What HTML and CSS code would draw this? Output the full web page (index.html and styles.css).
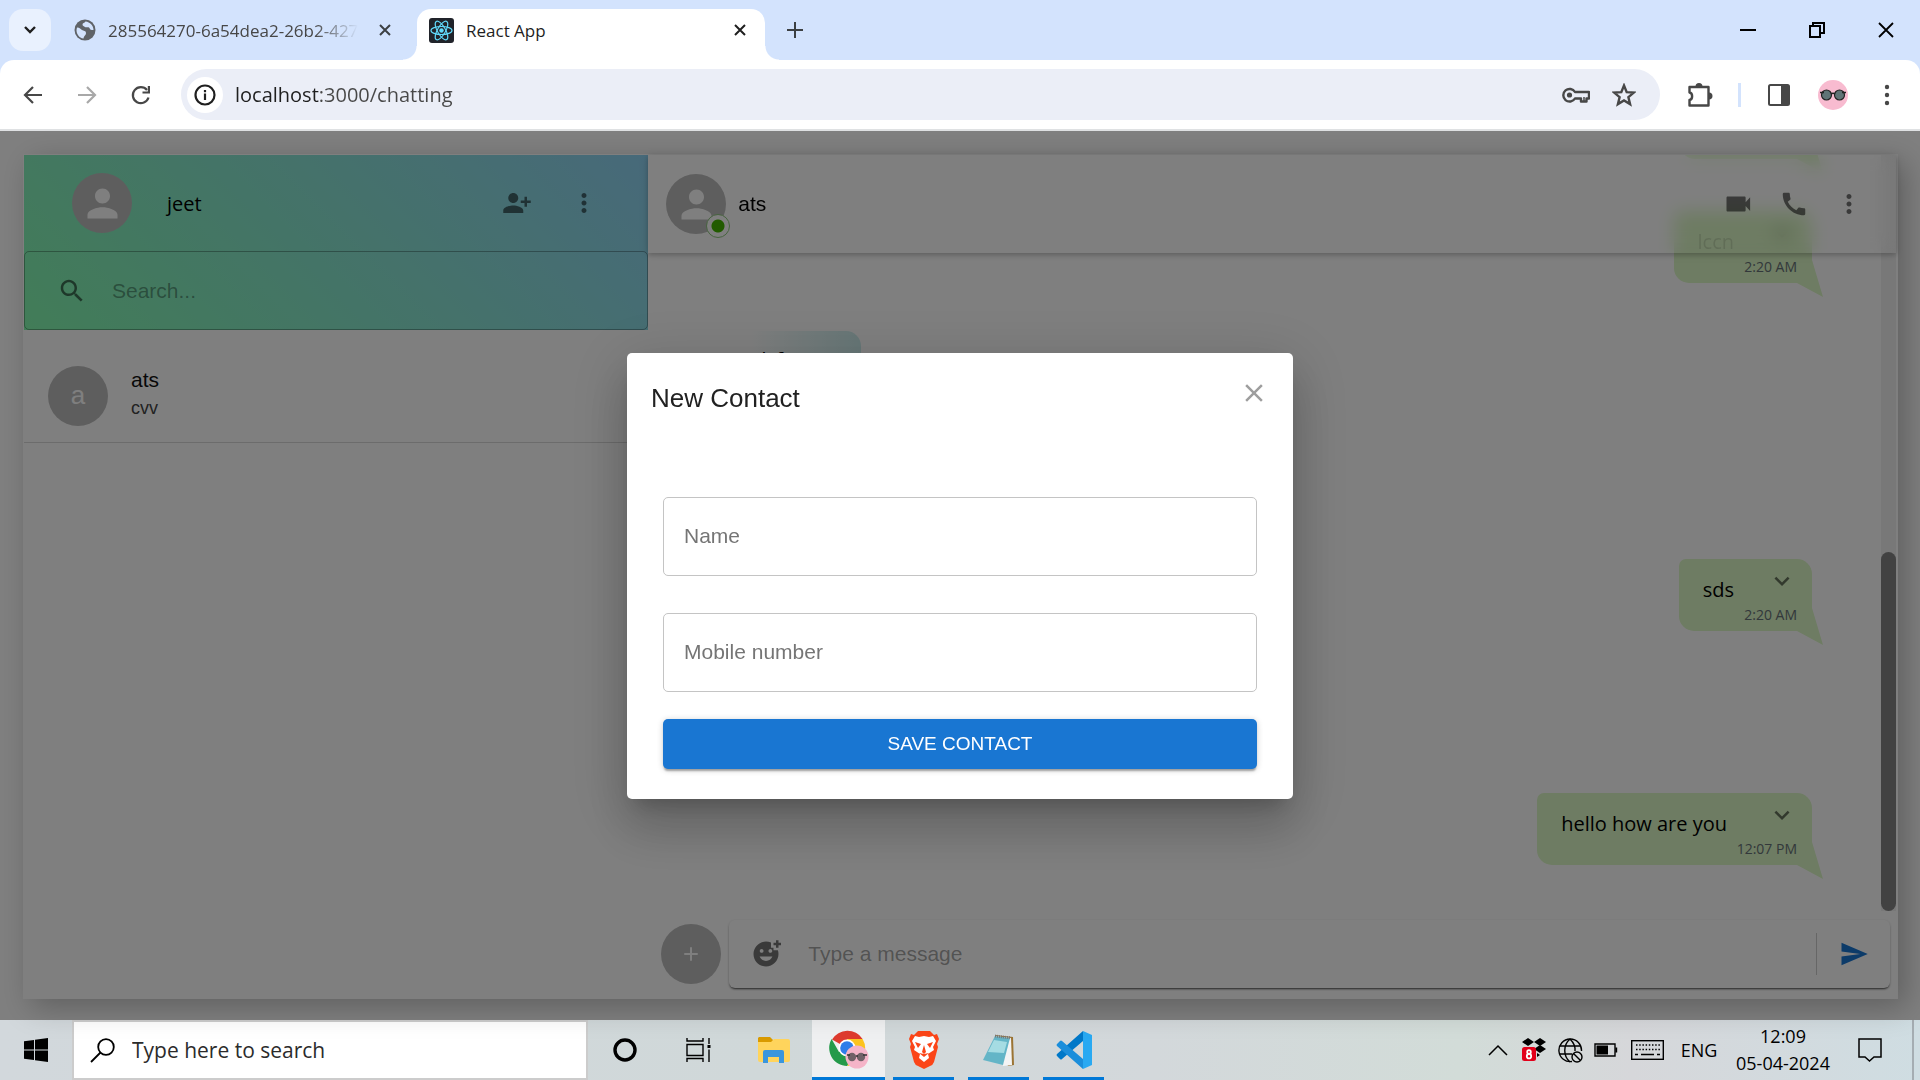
FILE: index.html
```html
<!DOCTYPE html>
<html lang="en">
<head>
<meta charset="utf-8">
<title>React App</title>
<link rel="stylesheet" href="styles.css">
</head>
<body>
<header class="tabstrip">
  <button class="tab-search" aria-label="Search tabs"><svg width="14" height="14" viewBox="0 0 14 14"><path d="M2 4l5 5 5-5" fill="none" stroke="#1f1f1f" stroke-width="2.4"/></svg></button>
  <div class="tab">
    <svg width="22" height="22" viewBox="0 0 22 22"><circle cx="11" cy="11" r="10.5" fill="#5f6368"/><path d="M3 8.500c3 0 3.500 1.500 5 2.500s4 .5 4 3-2 2.500-2.500 5.500C5 19 2.500 15 2.500 11zM11.500 2.500c-1 1.500-3 1.500-3 3s1.500 1.500 2.500 2.500 3-.5 4 .5 1 2.500 3 2.500h1.500c0-4.500-3.500-8-8-8.500z" fill="#d3e3fd"/></svg>
    <span class="tab-title fade">285564270-6a54dea2-26b2-427</span>
    <button class="tab-close" aria-label="Close tab"><svg width="14" height="14" viewBox="0 0 14 14"><path d="M2 2l10 10M12 2L2 12" stroke="#3c4043" stroke-width="2"/></svg></button>
  </div>
  <div class="tab active">
    <svg width="25" height="25" viewBox="0 0 25 25"><rect width="25" height="25" rx="3" fill="#20232a"/><g fill="none" stroke="#61dafb" stroke-width="1.200"><ellipse cx="12.500" cy="12.500" rx="10.500" ry="4"/><ellipse cx="12.500" cy="12.500" rx="10.500" ry="4" transform="rotate(60 12.500 12.500)"/><ellipse cx="12.500" cy="12.500" rx="10.500" ry="4" transform="rotate(120 12.500 12.500)"/></g><circle cx="12.500" cy="12.500" r="2.200" fill="#61dafb"/></svg>
    <span class="tab-title">React App</span>
    <button class="tab-close" aria-label="Close tab"><svg width="14" height="14" viewBox="0 0 14 14"><path d="M2 2l10 10M12 2L2 12" stroke="#1f1f1f" stroke-width="2"/></svg></button>
  </div>
  <button class="new-tab" aria-label="New tab"><svg width="16" height="16" viewBox="0 0 16 16"><path d="M8 0v16M0 8h16" stroke="#3c4043" stroke-width="2"/></svg></button>
  <div class="window-controls">
    <button aria-label="Minimize"><svg width="16" height="16" viewBox="0 0 16 16"><path d="M0 8h16" stroke="#000" stroke-width="2"/></svg></button>
    <button aria-label="Restore"><svg width="16" height="16" viewBox="0 0 16 16"><path d="M1 4h10v11H1zM4 4V1h11v10h-4" fill="none" stroke="#000" stroke-width="2"/></svg></button>
    <button aria-label="Close"><svg width="16" height="16" viewBox="0 0 16 16"><path d="M1 1l14 14M15 1L1 15" stroke="#000" stroke-width="1.800"/></svg></button>
  </div>
</header>

<nav class="toolbar">
  <button aria-label="Back"><svg width="20" height="20" viewBox="0 0 20 20"><path d="M10 2l-8 8 8 8M2 10h17" fill="none" stroke="#474747" stroke-width="2.200"/></svg></button>
  <button aria-label="Forward"><svg width="20" height="20" viewBox="0 0 20 20"><path d="M10 2l8 8-8 8M18 10H1" fill="none" stroke="#a8a8a8" stroke-width="2.200"/></svg></button>
  <button aria-label="Reload"><svg width="22" height="22" viewBox="0 0 22 22"><path d="M18.500 13.500a8 8 0 1 1-1.500-7.500" fill="none" stroke="#474747" stroke-width="2.200"/><path d="M20 2v7.500h-7.500v-2h5.300V2z" fill="#474747"/></svg></button>
  <div class="omnibox">
    <button class="site-info" aria-label="Site information"><svg width="22" height="22" viewBox="0 0 22 22"><circle cx="11" cy="11" r="9.500" fill="none" stroke="#1f1f1f" stroke-width="2.200"/><path d="M11 9.500V16M11 6v2.200" stroke="#1f1f1f" stroke-width="2.200"/></svg></button>
    <input class="address" type="text" value="localhost:3000/chatting" aria-label="Address">
    <button aria-label="Passwords"><svg width="28" height="18" viewBox="0 0 28 18"><path d="M13 6H27v6.500h-2.500v3h-5.500v-3h-6A6.300 6.300 0 1 1 13 6z" fill="none" stroke="#474747" stroke-width="2.400" stroke-linejoin="round"/><circle cx="7.500" cy="9" r="2.600" fill="#474747"/><path d="M22 11v4" stroke="#474747" stroke-width="1.500"/></svg></button>
    <button aria-label="Bookmark"><svg width="24" height="24" viewBox="0 0 24 24"><path d="M12 2.500l2.700 6.600 7.100.5-5.400 4.600 1.700 6.900-6.100-3.700-6.100 3.700 1.700-6.900-5.400-4.600 7.100-.5z" fill="none" stroke="#474747" stroke-width="2.400"/></svg></button>
  </div>
  <button class="after-omnibox" aria-label="Extensions"><svg width="26" height="26" viewBox="0 0 26 26"><path d="M2.500 5h19v18.500h-19v-5.500c3.500-.5 3.500-7 0-7.500z" fill="none" stroke="#474747" stroke-width="2.400" stroke-linejoin="round"/><path d="M8.500 4.500a3.500 3.500 0 0 1 7 0zM22 10.500a3.500 3.500 0 0 1 0 7z" fill="#474747"/></svg></button>
  <span class="toolbar-divider"></span>
  <button aria-label="Side panel"><svg width="22" height="22" viewBox="0 0 22 22"><rect x="1" y="1" width="20" height="20" rx="1.500" fill="none" stroke="#474747" stroke-width="2"/><path d="M13 1h8v20h-8z" fill="#474747"/></svg></button>
  <button aria-label="Profile"><svg width="30" height="30" viewBox="0 0 30 30"><circle cx="15" cy="15" r="15" fill="#f8bbd0"/><circle cx="8.500" cy="15" r="5" fill="#607476" stroke="#222" stroke-width="1.200"/><circle cx="21.500" cy="15" r="5" fill="#607476" stroke="#222" stroke-width="1.200"/><path d="M2 12.500h4M24 12.500h4M13 14q2-1.500 4 0" fill="none" stroke="#222" stroke-width="1.500"/></svg></button>
  <button aria-label="Menu"><svg width="6" height="22" viewBox="0 0 6 22"><g fill="#474747"><circle cx="3" cy="3" r="2.200"/><circle cx="3" cy="11" r="2.200"/><circle cx="3" cy="19" r="2.200"/></g></svg></button>
</nav>

<main class="page">
  <div class="app">
    <aside class="sidebar">
      <div class="sidebar-top">
        <div class="profile">
          <span class="avatar"><svg class="person" viewBox="0 0 24 24"><path d="M12 12c2.210 0 4-1.790 4-4s-1.790-4-4-4-4 1.790-4 4 1.790 4 4 4zm0 2c-2.670 0-8 1.340-8 4v2h16v-2c0-2.660-5.330-4-8-4z"/></svg></span>
          <span class="profile-name">jeet</span>
          <button class="icon-btn" aria-label="Add contact"><svg class="icon" viewBox="0 0 24 24"><path d="M13 8c0-2.210-1.790-4-4-4S5 5.790 5 8s1.790 4 4 4 4-1.790 4-4zm2 2v2h3v3h2v-3h3v-2h-3V7h-2v3h-3zM1 18v2h16v-2c0-2.660-5.330-4-8-4s-8 1.340-8 4z"/></svg></button>
          <button class="icon-btn" aria-label="More"><svg class="icon" viewBox="0 0 24 24"><path d="M12 8c1.100 0 2-.9 2-2s-.9-2-2-2-2 .9-2 2 .9 2 2 2zm0 2c-1.100 0-2 .9-2 2s.9 2 2 2 2-.9 2-2-.9-2-2-2zm0 6c-1.100 0-2 .9-2 2s.9 2 2 2 2-.9 2-2-.9-2-2-2z"/></svg></button>
        </div>
        <div class="search">
          <svg class="icon" viewBox="0 0 24 24"><path d="M15.500 14h-.79l-.28-.27C15.410 12.590 16 11.110 16 9.500 16 5.910 13.090 3 9.500 3S3 5.910 3 9.500 5.910 16 9.500 16c1.610 0 3.090-.59 4.230-1.570l.27.28v.79l5 4.990L20.490 19l-4.990-5zm-6 0C7.010 14 5 11.990 5 9.500S7.010 5 9.500 5 14 7.010 14 9.500 11.990 14 9.500 14z"/></svg>
          <input type="text" placeholder="Search..." aria-label="Search">
        </div>
      </div>
      <a class="chat-row" href="#ats">
        <span class="avatar letter">a</span>
        <span class="chat-info"><span class="chat-name">ats</span><span class="chat-last">cvv</span></span>
      </a>
    </aside>

    <section class="chat">
      <div class="thread">
        <div class="messages">
          <div class="bubble sent blank"></div>
          <div class="bubble sent under-header"><span class="text">lccn</span><svg class="icon" viewBox="0 0 24 24"><path d="M7.410 8.590L12 13.170l4.590-4.580L18 10l-6 6-6-6z"/></svg><time>2:20 AM</time></div>
          <div class="bubble received"><span class="text">dsf</span></div>
          <div class="bubble sent spaced"><span class="text">sds</span><svg class="icon" viewBox="0 0 24 24"><path d="M7.410 8.590L12 13.170l4.590-4.580L18 10l-6 6-6-6z"/></svg><time>2:20 AM</time></div>
          <div class="bubble sent spaced long"><span class="text">hello how are you</span><svg class="icon" viewBox="0 0 24 24"><path d="M7.410 8.590L12 13.170l4.590-4.580L18 10l-6 6-6-6z"/></svg><time>12:07 PM</time></div>
        </div>
        <div class="scrollbar"><div class="thumb"></div></div>
      </div>
      <header class="chat-header">
        <span class="avatar online"><svg class="person" viewBox="0 0 24 24"><path d="M12 12c2.210 0 4-1.790 4-4s-1.790-4-4-4-4 1.790-4 4 1.790 4 4 4zm0 2c-2.670 0-8 1.340-8 4v2h16v-2c0-2.660-5.330-4-8-4z"/></svg><span class="badge"></span></span>
        <span class="peer">ats</span>
        <button class="icon-btn" aria-label="Video call"><svg class="icon" viewBox="0 0 24 24"><path d="M17 10.500V7c0-.55-.45-1-1-1H1c-.55 0-1 .45-1 1v10c0 .55.45 1 1 1h15c.55 0 1-.45 1-1v-3.500l4 4v-11l-4 4z" transform="translate(2 0) scale(.9 1)"/></svg></button>
        <button class="icon-btn" aria-label="Call"><svg class="icon" viewBox="0 0 24 24"><path d="M20.010 15.380c-1.230 0-2.420-.2-3.530-.56-.35-.12-.74-.03-1.010.24l-1.570 1.970c-2.830-1.350-5.480-3.900-6.890-6.830l1.950-1.660c.27-.28.35-.67.24-1.020-.37-1.110-.56-2.300-.56-3.530 0-.54-.45-.99-.99-.99H4.190C3.650 3 3 3.240 3 3.990 3 13.280 10.730 21 20.010 21c.71 0 .99-.63.99-1.180v-3.450c0-.54-.45-.99-.99-.99z"/></svg></button>
        <button class="icon-btn" aria-label="More"><svg class="icon" viewBox="0 0 24 24"><path d="M12 8c1.100 0 2-.9 2-2s-.9-2-2-2-2 .9-2 2 .9 2 2 2zm0 2c-1.100 0-2 .9-2 2s.9 2 2 2 2-.9 2-2-.9-2-2-2zm0 6c-1.100 0-2 .9-2 2s.9 2 2 2 2-.9 2-2-.9-2-2-2z"/></svg></button>
      </header>
      <form class="composer">
        <button type="button" class="avatar" aria-label="Attach"><svg width="14" height="14" viewBox="0 0 14 14"><path d="M7 1v12M1 7h12" stroke="#fff" stroke-width="2" stroke-linecap="round"/></svg></button>
        <div class="compose-box">
          <button type="button" class="icon-btn" aria-label="Emoji"><svg class="icon" viewBox="0 0 24 24"><path d="M18 9V7h-2V2.840C14.770 2.300 13.420 2 11.990 2 6.470 2 2 6.480 2 12s4.470 10 9.990 10C17.520 22 22 17.520 22 12c0-1.050-.17-2.050-.47-3H18zm-2.500-1c.83 0 1.500.67 1.500 1.500s-.67 1.500-1.500 1.500-1.500-.67-1.500-1.500.67-1.500 1.500-1.500zm-7 0c.83 0 1.500.67 1.500 1.500S9.330 11 8.500 11 7 10.330 7 9.500 7.670 8 8.500 8zm3.500 9.500c-2.330 0-4.310-1.460-5.110-3.500h10.220c-.8 2.040-2.780 3.500-5.110 3.500zM22 3h2v2h-2v2h-2V5h-2V3h2V1h2v2z"/></svg></button>
          <input type="text" placeholder="Type a message" aria-label="Message">
          <button type="submit" class="send" aria-label="Send"><svg class="icon" viewBox="0 0 24 24"><path d="M2.010 21L23 12 2.010 3 2 10l15 2-15 2z"/></svg></button>
        </div>
      </form>
    </section>
  </div>

  <div class="backdrop">
    <form class="modal" role="dialog" aria-labelledby="modal-title">
      <div class="modal-head">
        <h2 id="modal-title">New Contact</h2>
        <button type="button" class="modal-close" aria-label="Close"><svg class="icon" viewBox="0 0 24 24"><path d="M19 6.410L17.590 5 12 10.590 6.410 5 5 6.410 10.590 12 5 17.590 6.410 19 12 13.410 17.590 19 19 17.590 13.410 12z"/></svg></button>
      </div>
      <div class="modal-body">
        <input class="field" type="text" placeholder="Name" aria-label="Name">
        <input class="field" type="tel" placeholder="Mobile number" aria-label="Mobile number">
        <button type="submit" class="save">SAVE CONTACT</button>
      </div>
    </form>
  </div>
</main>

<footer class="taskbar">
  <button class="start" aria-label="Start"><svg width="24" height="24" viewBox="0 0 24 24"><path d="M0 3.300L10 2v9.500H0zM11 1.800L24 0v11.500H11zM0 12.500h10V22L0 20.700zM11 12.500h13V24l-13-1.800z"/></svg></button>
  <label class="task-search">
    <svg width="25" height="25" viewBox="0 0 25 25"><circle cx="16" cy="9" r="7.800" fill="none" stroke="#000" stroke-width="1.800"/><path d="M10.500 14.500L1 24" stroke="#000" stroke-width="1.800"/></svg>
    <input type="text" placeholder="Type here to search">
  </label>
  <div class="task-apps">
    <button aria-label="Cortana"><svg width="24" height="24" viewBox="0 0 24 24"><circle cx="12" cy="12" r="10" fill="none" stroke="#000" stroke-width="3.400"/></svg></button>
    <button aria-label="Task view"><svg width="26" height="26" viewBox="0 0 26 26"><path d="M1 1v3h16V1M1 7.500h16v11H1zM1 25v-3.500h16V25M23 1v6M23 12.500V25" fill="none" stroke="#000" stroke-width="1.400"/><path d="M21.500 8h3v3h-3z"/></svg></button>
    <button aria-label="File Explorer"><svg width="32" height="28" viewBox="0 0 32 28"><path d="M1 1h11l3 3v4H0V2z" fill="#d99a00"/><path d="M0 6h13l3-3h14q2 0 2 2v19q0 2-2 2H2q-2 0-2-2z" fill="#ffd45c"/><path d="M5 27V16q0-2 2-2h17q2 0 2 2v11h-5v-6H10v6z" fill="#3a96dd"/></svg></button>
    <button class="running current" aria-label="Chrome"><svg width="40" height="40" viewBox="0 0 40 40"><path d="M18 18L3 9.500A18 18 0 0 1 33.600 9H18z" fill="#de3b2e"/><path d="M18 18L18 9H33.600A18 18 0 0 1 18 36l8-14z" fill="#fcc31e"/><path d="M18 18l8 4-8 14A18 18 0 0 1 2.600 9L10 22z" fill="#249a4a"/><circle cx="18" cy="18" r="8.500" fill="#fff"/><circle cx="18" cy="18" r="6.800" fill="#2f7de9"/><circle cx="28" cy="27" r="11.500" fill="#f5b4c8"/><circle cx="23" cy="27" r="4.200" fill="#716167"/><circle cx="32" cy="27" r="4.200" fill="#716167"/><path d="M18 25h3M34 25h4M27 26h2" stroke="#333" stroke-width="1.500"/></svg></button>
    <button class="running" aria-label="Brave"><svg width="30" height="38" viewBox="0 0 30 38"><path d="M9 0h12l4 4 3-1 2 5-2 5 1 3-4 15q-1 3-4 4l-6 3-6-3q-3-1-4-4L1 16l1-3-2-5 2-5 3 1z" fill="#fb4518"/><path d="M15 5l5 1 4-1 3 5-3 6 1 3-6 4 1 4-5 4-5-4 1-4-6-4 1-3-3-6 3-5 4 1z" fill="#fff"/><path d="M6 11l6 2-3 4zM24 11l-6 2 3 4zM15 14l2 7-2 2-2-2zM10 22l5 4 5-4-5 1z" fill="#fb4518"/></svg></button>
    <button class="running" aria-label="Notepad"><svg width="34" height="34" viewBox="0 0 34 34"><path d="M13 2l18 2 1 28-6 1z" fill="#9b7434"/><path d="M13 3l16 2 1 27-9 1z" fill="#f4f4f4"/><path d="M13 3l15 2-7 27-20-5z" fill="#64b5c7"/><path d="M12 7l13 2-3 11-16-1z" fill="#a5dce3"/><path d="M13 3l16 2" stroke="#777" stroke-width="3" stroke-dasharray="1 1"/></svg></button>
    <button class="running" aria-label="Visual Studio Code"><svg width="36" height="38" viewBox="0 0 36 38"><path d="M27 0v10L6 28q-1 1-2 0l-3-3q-1-1 0-2z" fill="#0078c8"/><path d="M27 38V28L6 10q-1-1-2 0l-3 3q-1 1 0 2z" fill="#1b8edb"/><path d="M27 0l9 4v30l-9 4z" fill="#29a9f2"/></svg></button>
  </div>
  <div class="tray">
    <button aria-label="Show hidden icons"><svg width="20" height="12" viewBox="0 0 20 12"><path d="M1 11l9-9 9 9" fill="none" stroke="#000" stroke-width="1.500"/></svg></button>
    <button aria-label="Dropbox"><svg width="24" height="24" viewBox="0 0 24 24"><path d="M6 0l6 4-6 4-6-4zM18 0l6 4-6 4-6-4zM18 7l6 4-6 4-6-4zM15 15l3 2-3 2z"/><rect y="9" width="14" height="14" rx="2.500" fill="#e2001a"/><g fill="none" stroke="#fff" stroke-width="1.800"><circle cx="7" cy="14" r="1.800"/><circle cx="7" cy="18.200" r="2.200"/></g></svg></button>
    <button aria-label="Network"><svg width="25" height="25" viewBox="0 0 25 25"><g fill="none" stroke="#000" stroke-width="1.400"><path d="M14 23.500A11.300 11.300 0 1 1 23.500 13"/><path d="M12 1c-7 6-7 17 0 23M12 1c4 4 5.500 8 5 12M2 8h20M2 16h12"/><circle cx="19" cy="19" r="5"/><path d="M15.500 15.500l7 7"/></g></svg></button>
    <button aria-label="Battery"><svg width="24" height="14" viewBox="0 0 24 14"><path d="M1 1h20v12H1zM22.500 4.500v5" fill="none" stroke="#000" stroke-width="1.400"/><path d="M2.500 2.500H14v9H2.500z"/></svg></button>
    <button aria-label="Touch keyboard"><svg width="33" height="20" viewBox="0 0 33 20"><rect x=".7" y=".7" width="31.600" height="18.600" fill="none" stroke="#000" stroke-width="1.400"/><path d="M5 5h24M5 9.500h24" stroke="#000" stroke-width="1.400" stroke-dasharray="1.500 1.700"/><path d="M4 14.500h3M10 14.500h13M26 14.500h3" stroke="#000" stroke-width="1.400"/></svg></button>
    <button>ENG</button>
    <button class="clock"><span>12:09</span><span>05-04-2024</span></button>
    <button aria-label="Notifications"><svg width="24" height="24" viewBox="0 0 24 24"><path d="M1 1h22v18h-7l-4.500 4L7 19H1z" fill="none" stroke="#000" stroke-width="1.500"/></svg></button>
    <button class="show-desktop" aria-label="Show desktop"></button>
  </div>
</footer>
</body>
</html>
```
FILE: styles.css
```css
* { box-sizing: border-box; }

body {
  margin: 0;
  height: 100vh;
  display: flex;
  flex-direction: column;
  overflow: hidden;
  font-family: "Open Sans", "Noto Sans", sans-serif;
  font-size: 20px;
  color: #000;
}

button {
  border: 0;
  padding: 0;
  background: none;
  font: inherit;
  color: inherit;
  display: flex;
  align-items: center;
  justify-content: center;
}

input {
  border: 0;
  padding: 0;
  min-width: 0;
  background: none;
  font: 21px "Liberation Sans", Arial, sans-serif;
  outline: 0;
}

svg { display: block; flex: none; }

/* Tab strip */
.tabstrip {
  flex: none;
  height: 60px;
  padding: 9px 0 0 9px;
  display: flex;
  background: #d3e3fd;
}
.tab-search {
  width: 42px;
  height: 42px;
  border-radius: 14px;
  background: #e9f1fe;
}
.tab {
  width: 348px;
  margin-left: 11px;
  padding: 0 18px 9px 12px;
  display: flex;
  align-items: center;
  gap: 12px;
  font-size: 17px;
  color: #474747;
}
.tab-title { flex: 1; white-space: nowrap; overflow: hidden; }
.fade { mask-image: linear-gradient(90deg, #000 80%, transparent 97%); }
.tab-close { width: 14px; height: 14px; }
.tab.active {
  margin-left: 7px;
  background: #fff;
  border-radius: 14px 14px 0 0;
  color: #1f1f1f;
  position: relative;
}
.tab.active::before,
.tab.active::after {
  content: "";
  position: absolute;
  bottom: 0;
  width: 14px;
  height: 14px;
}
.tab.active::before { right: 100%; background: radial-gradient(circle at 0 0, transparent 13px, #fff 14px); }
.tab.active::after { left: 100%; background: radial-gradient(circle at 100% 0, transparent 13px, #fff 14px); }
.new-tab { width: 60px; height: 42px; }
.window-controls { margin-left: auto; display: flex; }
.window-controls button { width: 69px; height: 42px; }

/* Toolbar */
.toolbar {
  flex: none;
  height: 71px;
  padding: 9px 6px;
  display: flex;
  border-bottom: 2px solid #dfe1e3;
  background: linear-gradient(#fff, #fff) padding-box, #d3e3fd;
  border-radius: 14px 14px 0 0;
  box-shadow: 0 -14px 0 14px #d3e3fd;
  clip-path: inset(0);
}
.toolbar > button { width: 54px; height: 51px; }
.toolbar > .after-omnibox { margin-left: 13px; }
.toolbar-divider {
  width: 3px;
  height: 24px;
  margin: 14px 11px;
  background: #d3e3fd;
}
.omnibox {
  flex: 1;
  height: 51px;
  margin-left: 13px;
  padding: 0 12px 0 6px;
  display: flex;
  align-items: center;
  border-radius: 26px;
  background: #ebeef7;
}
.omnibox button { width: 48px; height: 36px; }
.omnibox .site-info { width: 36px; border-radius: 50%; background: #fff; }
.address {
  flex: 1;
  margin-left: 12px;
  font: 20px "Open Sans", "Noto Sans", sans-serif;
  color: transparent;
  background: linear-gradient(90deg, #1f1f1f 84px, #474747 84px);
  background-clip: text;
}

/* Page */
.page {
  flex: 1;
  min-height: 0;
  display: grid;
  position: relative;
}
.app {
  margin: 23px 22px 21px 23px;
  min-height: 0;
  border: 1px solid #fff;
  display: grid;
  grid-template-columns: 1fr 2fr;
  box-shadow: 8px 8px 28px rgba(0, 0, 0, .25);
}
.icon { width: 30px; height: 30px; fill: rgba(0, 0, 0, .54); }
.icon-btn { width: 30px; height: 30px; }
.avatar {
  flex: none;
  width: 60px;
  height: 60px;
  border-radius: 50%;
  background: #bdbdbd;
  display: flex;
  align-items: center;
  justify-content: center;
}
.person { width: 45px; height: 45px; fill: #fff; }

.sidebar-top { background: linear-gradient(45deg, #84fab0, #8fd3f4); }
.profile {
  height: 96px;
  padding: 0 49px 0 48px;
  display: flex;
  align-items: center;
}
.profile-name { flex: 1; margin-left: 35px; font-weight: 500; }
.profile .icon-btn + .icon-btn { margin-left: 37px; }
.search {
  height: 79px;
  padding: 0 32px;
  display: flex;
  align-items: center;
  gap: 25px;
  border: 1px solid rgba(0, 0, 0, .3);
  border-radius: 5px;
}
.search input { flex: 1; }
.search input::placeholder,
.compose-box input::placeholder { color: rgba(0, 0, 0, .37); }
.chat-row {
  height: 113px;
  padding: 19px 24px 0;
  display: flex;
  align-items: center;
  gap: 23px;
  border-bottom: 1px solid #d8d8d8;
  font-family: "Liberation Sans", Arial, sans-serif;
  color: #111;
  text-decoration: none;
}
.letter { font-size: 26px; color: #fff; }
.chat-info {
  padding-bottom: 4px;
  display: flex;
  flex-direction: column;
  line-height: 28px;
}
.chat-name { font-size: 21px; }
.chat-last { font-size: 18px; color: #444; }

/* Chat pane: the thread runs on underneath the header */
.chat {
  min-height: 0;
  display: grid;
  grid-template: 98px minmax(0, 1fr) 87px / minmax(0, 1fr);
}
.thread {
  grid-area: 1 / 1 / 3 / 2;
  min-height: 0;
  display: flex;
  overflow: hidden;
}
.messages {
  flex: 1;
  min-height: 0;
  padding: 0 69px 46px 82px;
  display: flex;
  flex-direction: column;
  justify-content: flex-end;
  align-items: flex-end;
}
.scrollbar {
  width: 15px;
  margin-right: 1px;
  background: #f1f1f1;
  display: flex;
  align-items: flex-end;
}
.thumb { width: 15px; height: 47.5%; border-radius: 8px; background: #858585; }

.bubble {
  flex: none;
  height: 72px;
  padding: 7px 15px 0 24px;
  display: grid;
  grid-template-columns: auto 30px;
  grid-template-rows: 30px 22px;
  column-gap: 33px;
  border-radius: 7px 15px 0 15px;
  background: #dcf8c6;
  position: relative;
}
.bubble.long { column-gap: 40px; }
.bubble .text { line-height: 48px; white-space: nowrap; }
.bubble time {
  grid-column: 1 / 3;
  justify-self: end;
  line-height: 38px;
  font-size: 14px;
  color: #667176;
}
.sent::after {
  content: "";
  position: absolute;
  right: -11px;
  top: 49px;
  width: 26px;
  height: 37px;
  background: inherit;
  clip-path: polygon(15px 0, 100% 100%, 0 23px);
}
.blank { width: 132px; }
.spaced { margin-top: 162px; }
.received {
  align-self: flex-start;
  margin-top: 48px;
  border-radius: 15px 15px 15px 0;
  background: linear-gradient(90deg, #fff 15%, #cdeeee);
}
.received .text { line-height: 44px; }
.received + .spaced { margin-top: 156px; }
.under-header { margin-top: 52px; }
.under-header .text {
  position: relative;
  z-index: 3;
  color: rgba(0, 0, 0, .12);
}

.chat-header {
  grid-area: 1 / 1;
  z-index: 2;
  margin-right: 1px;
  padding: 0 32px 0 18px;
  display: flex;
  align-items: center;
  backdrop-filter: blur(9px);
  box-shadow: 0 2px 5px rgba(0, 0, 0, .2), 0 1px 10px rgba(0, 0, 0, .1);
}
.chat-header .icon-btn + .icon-btn { margin-left: 25px; }
.online { position: relative; }
.badge {
  position: absolute;
  right: -4px;
  bottom: -4px;
  width: 24px;
  height: 24px;
  border: 1px solid #8fc77f;
  border-radius: 50%;
  background: radial-gradient(circle, #44b700 6px, #fff 7px);
}
.peer { flex: 1; margin-left: 12px; font: 21px "Liberation Sans", Arial, sans-serif; }

.composer {
  grid-row: 3;
  padding: 9px 7px 10px 13px;
  display: flex;
  align-items: center;
  gap: 8px;
}
.compose-box {
  flex: 1;
  height: 68px;
  padding-left: 22px;
  display: flex;
  align-items: center;
  border-radius: 6px;
  box-shadow: 0 2px 2px -1px rgba(0, 0, 0, .6), 0 1px 3px rgba(0, 0, 0, .2);
}
.compose-box input { flex: 1; margin-left: 27px; }
.send { width: 74px; height: 42px; border-left: 1px solid #ccc; }
.send .icon { fill: #1976d2; }

/* Modal */
.backdrop {
  position: absolute;
  inset: 0;
  z-index: 5;
  display: grid;
  place-items: center;
  background: rgba(0, 0, 0, .5);
}
.modal {
  width: 666px;
  max-width: 90%;
  border-radius: 5px;
  background: #fff;
  font-family: "Liberation Sans", Arial, sans-serif;
  box-shadow: 0 14px 19px -9px rgba(0, 0, 0, .2), 0 30px 48px 4px rgba(0, 0, 0, .14), 0 11px 58px 10px rgba(0, 0, 0, .12);
}
.modal-head {
  padding: 25px 24px 0;
  display: flex;
  justify-content: space-between;
}
.modal-head h2 { margin: 0; font-size: 26px; font-weight: 400; line-height: 40px; color: #212121; }
.modal-close { width: 30px; height: 30px; }
.modal-close .icon { fill: #9e9e9e; }
.modal-body { padding: 79px 36px 30px; display: flex; flex-direction: column; }
.field {
  height: 79px;
  margin-bottom: 37px;
  padding: 0 20px;
  border: 1px solid #c4c4c4;
  border-radius: 5px;
}
.field + .field { margin-bottom: 27px; }
.field::placeholder { color: #757575; }
.save {
  height: 50px;
  border-radius: 5px;
  background: #1976d2;
  color: #fff;
  font-size: 19px;
  box-shadow: 0 3px 2px -1px rgba(0, 0, 0, .3), 0 1px 6px rgba(0, 0, 0, .2);
}

/* Taskbar */
.taskbar {
  flex: none;
  height: 60px;
  display: flex;
  background: linear-gradient(90deg, #d2d8dc, #d0d8d9 40%, #d3d8db 60%, #d2dcd8 76%, #d6d7da 85%, #cfdde2);
  font-size: 18px;
}
.start { width: 72px; }
.task-search {
  width: 516px;
  padding-left: 16px;
  display: flex;
  align-items: center;
  gap: 17px;
  border: 2px solid #ccc;
  background: #fff;
}
.task-search input { flex: 1; font: 21px "Open Sans", "Noto Sans", sans-serif; }
.task-search input::placeholder { color: #2b2b2b; }
.task-apps { display: flex; }
.task-apps button { width: 61px; margin: 0 7px; }
.task-apps button:first-child { margin: 0 6px; }
.task-apps .running { border-bottom: 3px solid #0078d7; padding-top: 3px; }
.task-apps .current { width: 73px; margin: 0 1px; background: #eff0f1; }
.tray {
  margin-left: auto;
  display: grid;
  grid-template-columns: repeat(4, 36px) 46px 58px 110px 74px 8px;
}
.tray button:nth-child(8) { padding-right: 10px; }
.clock { flex-direction: column; line-height: 27px; }
.show-desktop { border-left: 2px solid #a5adb2; }
```
